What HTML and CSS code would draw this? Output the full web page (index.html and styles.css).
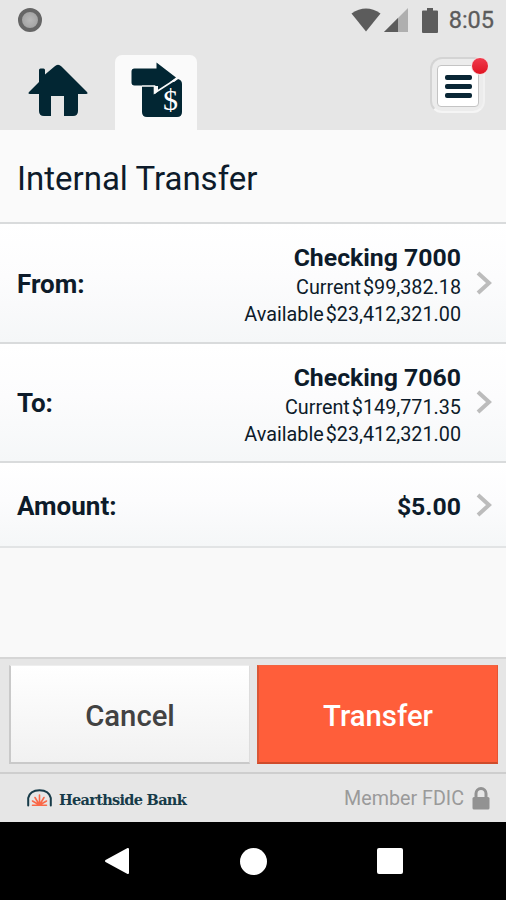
FILE: index.html
```html
<!DOCTYPE html>
<html lang="en">
  <head>
    <meta charset="utf-8" />
    <title>Internal Transfer</title>
    <meta name="viewport" content="width=device-width, initial-scale=1.0" />
    <link rel="stylesheet" href="styles.css">
  </head>
  <body>
    <div class="screen">
      <div class="statusbar">
        <span class="recorder"></span>
        <div class="indicators">
          <svg class="wifi" width="30" height="24" viewBox="0 0 30 24">
            <path d="M0.500 5.500Q15-4.500 29.500 5.500L15 23.500z" fill="#5c5c5c" />
          </svg>
          <svg class="signal" width="24" height="24" viewBox="0 0 24 24">
            <path d="M0 24L24 0V24z" fill="#afafaf" />
            <path d="M0 24L14 10V24z" fill="#5c5c5c" />
          </svg>
          <svg class="battery" width="16" height="25" viewBox="0 0 16 25">
            <path d="M5 0h6v2.500h4a1 1 0 0 1 1 1V24a1 1 0 0 1-1 1H1a1 1 0 0 1-1-1V3.500a1 1 0 0 1 1-1h4z" fill="#5c5c5c" />
          </svg>
          <span class="clock">8:05</span>
        </div>
      </div>
      <div class="tabs">
        <a class="tab home">
          <svg width="60" height="53" viewBox="0 0 60 53">
            <path d="M11 18V6q0-1.500 1.500-1.500h3q1.500 0 1.500 1.500v4.500L26.500 2.500Q30-1 33.500 2.500L59 28q1.500 2-1 2H50v17q0 5-5 5H36V32H23v20h-7q-5 0-5-5V30H2q-2.500 0-1-2z" fill="#022633" />
          </svg>
        </a>
        <a class="tab active">
          <svg width="52" height="56" viewBox="0 0 52 56">
            <path d="M11 20h32l4-3q4 1 4 5v28q0 5-5 5H16q-5 0-5-5z" fill="#022633" />
            <path d="M0.500 9.500q0-3 3-3H25.500V0.500L45 15.500 25.500 30.500V23.500H3.500q-3 0-3-3z" fill="#022633" />
            <path d="M11 24h12.500v7L46 16.500" fill="none" stroke="#fafafa" stroke-width="1.600" />
            <path d="M24 24h3v5l-3 3z" fill="#fafafa" />
            <text x="39.500" y="47.500" class="dollar">$</text>
          </svg>
        </a>
        <a class="menu">
          <span class="menu-face">
            <span class="line"></span>
            <span class="line"></span>
            <span class="line"></span>
          </span>
          <span class="alert"></span>
        </a>
      </div>
      <h1>Internal Transfer</h1>
      <div class="rows">
        <div class="row">
          <span class="label">From:</span>
          <div class="value">
            <p class="account">Checking 7000</p>
            <p class="balance"><span>Current</span><span>$99,382.18</span></p>
            <p class="balance"><span>Available</span><span>$23,412,321.00</span></p>
          </div>
          <svg class="chevron" width="16" height="24" viewBox="0 0 16 24">
            <path d="M2 2L13 12 2 22" />
          </svg>
        </div>
        <div class="row">
          <span class="label">To:</span>
          <div class="value">
            <p class="account">Checking 7060</p>
            <p class="balance"><span>Current</span><span>$149,771.35</span></p>
            <p class="balance"><span>Available</span><span>$23,412,321.00</span></p>
          </div>
          <svg class="chevron" width="16" height="24" viewBox="0 0 16 24">
            <path d="M2 2L13 12 2 22" />
          </svg>
        </div>
        <div class="row amount">
          <span class="label">Amount:</span>
          <div class="value">
            <p class="account">$5.00</p>
          </div>
          <svg class="chevron" width="16" height="24" viewBox="0 0 16 24">
            <path d="M2 2L13 12 2 22" />
          </svg>
        </div>
      </div>
      <div class="buttons">
        <button class="cancel">Cancel</button>
        <button class="transfer">Transfer</button>
      </div>
      <div class="footer">
        <svg class="logo" width="25" height="18" viewBox="0 0 25 18">
          <path d="M1.200 16.500V9Q3 1.200 12.500 1.200T23.800 9v7.500" fill="none" stroke="#173b49" stroke-width="2" stroke-linecap="round" />
          <path d="M5.500 16.300h14M12.500 16V6M12.500 16L8 8.500M12.500 16l4.500-7.500M12.500 16l-7-4M12.500 16l7-4" fill="none" stroke="#fa6848" stroke-width="1.600" stroke-linecap="round" />
        </svg>
        <span class="bank">Hearthside Bank</span>
        <span class="fdic">Member FDIC</span>
        <svg class="lock" width="18" height="23" viewBox="0 0 18 23">
          <path d="M4 11V6.500a5 5 0 0 1 10 0V11" fill="none" stroke="#929292" stroke-width="3" />
          <rect x="0.500" y="10" width="17" height="12.500" rx="1.500" fill="#929292" />
        </svg>
      </div>
      <div class="navbar">
        <svg width="26" height="28" viewBox="0 0 26 28">
          <path d="M2 14L24 2v24z" fill="#fff" stroke="#fff" stroke-width="2" stroke-linejoin="round" />
        </svg>
        <span class="nav-home"></span>
        <span class="nav-recent"></span>
      </div>
    </div>
  </body>
</html>
```
FILE: styles.css
```css
* {
  box-sizing: border-box;
}
body {
  margin: 0;
  background: #e6e6e6;
  font-family: Roboto, sans-serif;
  color: #0d1b2a;
}
svg {
  display: block;
  flex: none;
}
p {
  margin: 0;
}
.screen {
  display: flex;
  flex-direction: column;
  width: 506px;
  height: 900px;
  overflow: hidden;
}
.statusbar {
  display: flex;
  justify-content: space-between;
  align-items: center;
  height: 41px;
  padding: 0 12px 1px 18px;
}
.recorder {
  width: 24px;
  height: 24px;
  border: 4px solid #666;
  border-radius: 50%;
  background: radial-gradient(#b8b8b8, #9c9c9c);
}
.indicators {
  display: flex;
  align-items: center;
}
.signal {
  margin-left: 3px;
}
.battery {
  margin-left: 14px;
}
.clock {
  margin-left: 11px;
  font-size: 23.5px;
  font-weight: 400;
  -webkit-text-stroke: 0.3px #5c5c5c;
  line-height: 30px;
  color: #5c5c5c;
}
.tabs {
  display: flex;
  height: 89px;
  padding: 14px 21px 0 0;
}
.tab {
  display: flex;
  justify-content: center;
}
.home {
  width: 115px;
  padding-top: 9px;
}
.active {
  width: 82px;
  padding: 7px 0 0 2px;
  border-radius: 7px 7px 0 0;
  background: #fafafa;
}
.dollar {
  font-family: "Liberation Serif", serif;
  font-size: 30px;
  fill: #fff;
  text-anchor: middle;
}
.menu {
  position: relative;
  width: 55px;
  height: 56px;
  margin-top: 2px;
  margin-left: auto;
  padding: 6px 5px;
  border: 2px solid #d4d4d4;
  border-right-color: #f1f1f1;
  border-bottom-color: #f5f5f5;
  border-radius: 12px;
  background: #ececec;
}
.menu-face {
  display: flex;
  flex-direction: column;
  justify-content: center;
  align-items: center;
  gap: 4px;
  width: 42px;
  height: 42px;
  border: 1px solid #c4c4c4;
  border-radius: 4px;
  background: #fff;
}
.line {
  width: 27px;
  height: 5px;
  border-radius: 2px;
  background: #092635;
}
.alert {
  position: absolute;
  top: -2px;
  right: -6px;
  width: 18px;
  height: 18px;
  border: 1px solid #f4e4e4;
  border-radius: 50%;
  background: linear-gradient(#f03a4c, #e01422);
}
h1 {
  height: 92px;
  margin: 0;
  padding: 0 17px;
  background: #fafafa;
  font-size: 33px;
  font-weight: 400;
  line-height: 97px;
}
.rows {
  flex: 1;
  background: #f9f9f9;
}
.row {
  display: flex;
  align-items: center;
  height: 119.500px;
  padding: 0 14px 0 17px;
  border-top: 2px solid #d9dbdc;
  background: linear-gradient(#fff, #fcfcfd 45%, #f5f7f8);
}
.label {
  padding-top: 2px;
  font-size: 26px;
  font-weight: 700;
}
.value {
  margin-left: auto;
  padding-top: 4px;
  text-align: right;
}
.account {
  font-size: 24.8px;
  font-weight: 700;
  line-height: 33px;
}
.balance {
  display: flex;
  justify-content: flex-end;
  gap: 2px;
  font-size: 19.8px;
  line-height: 27px;
}
.chevron {
  margin-left: 15px;
}
.chevron path {
  fill: none;
  stroke: #bcbcbc;
  stroke-width: 4px;
}
.amount {
  height: 87px;
  border-bottom: 2px solid #e2e4e5;
}
.buttons {
  display: flex;
  gap: 7px;
  height: 115px;
  padding: 6px 8px 8px 9px;
  border-top: 2px solid #d6d6d6;
}
.buttons button {
  flex: 1;
  height: 99px;
  border: 1px solid #c9c9c9;
  border-width: 1px 1px 2px 2px;
  padding: 3px 0 0;
  font-family: inherit;
  font-size: 29.3px;
  font-weight: 500;
}
.buttons .cancel {
  border-top-color: #eee;
  border-right-color: #ddd;
  background: linear-gradient(#fff, #f1f1f1);
  color: #424242;
}
.buttons .transfer {
  border-color: #f26440 #e75432 #cf4b2b #d95736;
  background: #ff5e3a;
  color: #fff;
}
.footer {
  display: flex;
  align-items: center;
  height: 50px;
  padding: 0 16px 0 27px;
  border-top: 2px solid #cecece;
}
.bank {
  margin-left: 7px;
  padding-top: 2px;
  font-family: "DejaVu Serif", serif;
  font-size: 14.5px;
  font-weight: 700;
  letter-spacing: -0.7px;
  color: #173b49;
}
.fdic {
  margin-left: auto;
  font-size: 19.7px;
  color: #9a9a9a;
}
.lock {
  margin-left: 8px;
}
.navbar {
  display: flex;
  align-items: center;
  height: 78px;
  padding-left: 104px;
  background: #000;
}
.nav-home {
  width: 27px;
  height: 27px;
  margin-left: 110px;
  border-radius: 50%;
  background: #fff;
}
.nav-recent {
  width: 26px;
  height: 26px;
  margin-left: 110px;
  border-radius: 2px;
  background: #fff;
}
```
